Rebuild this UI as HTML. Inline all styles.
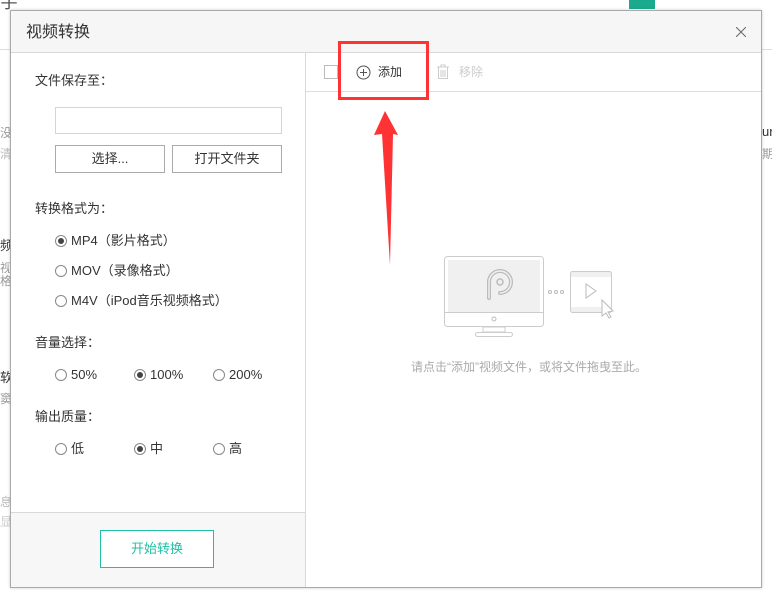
<!DOCTYPE html>
<html><head><meta charset="utf-8"><style>
*{margin:0;padding:0;box-sizing:border-box}
body{width:772px;height:596px;overflow:hidden;background:#fff;font-family:"Liberation Sans","Noto Sans CJK SC",sans-serif;position:relative;color:#333}
.a{position:absolute}
.t{font-size:13px;color:#333;white-space:nowrap;line-height:16px}
.r{position:absolute;width:12px;height:12px;border:1px solid #888;border-radius:50%;background:#fff}
.r.on::after{content:"";position:absolute;left:2px;top:2px;width:6px;height:6px;border-radius:50%;background:#444}
.btn{position:absolute;border:1px solid #aaa;background:#fff;font-size:13px;text-align:center;line-height:26px;color:#333}
.bg{color:#999;font-size:12px}
</style></head><body>
<div class="a" style="left:0;top:0;width:772px;height:50px;background:#fff;border-bottom:1px solid #ddd"></div>
<div class="a t" style="left:0;top:-6px;font-size:18px;color:#555">宇</div>
<div class="a" style="left:629px;top:0;width:26px;height:9px;background:#1aaa8e"></div>
<div class="a bg" style="left:0;top:124px">没</div><div class="a bg" style="left:0;top:145px;color:#bbb">清</div>
<div class="a t" style="left:0;top:238px">频</div><div class="a bg" style="left:0;top:259px">视</div><div class="a bg" style="left:0;top:272px">格</div>
<div class="a t" style="left:0;top:370px">软</div><div class="a bg" style="left:0;top:390px">窦</div>
<div class="a bg" style="left:0;top:493px;color:#bbb">息</div><div class="a bg" style="left:0;top:513px;color:#ccc">显</div>
<div class="a t" style="left:762px;top:124px">un</div><div class="a bg" style="left:762px;top:145px">期</div>

<div class="a" style="left:10px;top:10px;width:752px;height:578px;background:#fff;border:1px solid #aaa;box-shadow:0 0 3px rgba(0,0,0,.2)">
 <div class="a" style="left:0;top:0;width:750px;height:42px;background:#f6f6f6;border-bottom:1px solid #d8d8d8"></div>
 <div class="a t" style="left:15px;top:12px;font-size:16px;line-height:20px">视频转换</div>
 <svg class="a" style="left:725px;top:16px" width="10" height="10"><path d="M0 0L10 10M10 0L0 10" stroke="#666"/></svg>
 <div class="a" style="left:294px;top:42px;width:1px;height:534px;background:#d8d8d8"></div>
 <div class="a" style="left:0;top:501px;width:294px;height:75px;background:#f7f7f7;border-top:1px solid #d8d8d8"></div>
 <div class="a" style="left:295px;top:80px;width:455px;height:1px;background:#ddd"></div>
</div>
<!-- left panel -->
<div class="a t" style="left:35px;top:73px">文件保存至：</div>
<div class="a" style="left:55px;top:107px;width:227px;height:27px;border:1px solid #d5d5d5"></div>
<div class="btn" style="left:55px;top:145px;width:110px;height:28px">选择...</div>
<div class="btn" style="left:172px;top:145px;width:110px;height:28px">打开文件夹</div>
<div class="a t" style="left:35px;top:201px">转换格式为：</div>
<div class="r on" style="left:55px;top:235px"></div><div class="a t" style="left:71px;top:233px">MP4（影片格式）</div>
<div class="r" style="left:55px;top:265px"></div><div class="a t" style="left:71px;top:263px">MOV（录像格式）</div>
<div class="r" style="left:55px;top:295px"></div><div class="a t" style="left:71px;top:293px">M4V（iPod音乐视频格式）</div>
<div class="a t" style="left:35px;top:335px">音量选择：</div>
<div class="r" style="left:55px;top:369px"></div><div class="a t" style="left:71px;top:367px">50%</div>
<div class="r on" style="left:134px;top:369px"></div><div class="a t" style="left:150px;top:367px">100%</div>
<div class="r" style="left:213px;top:369px"></div><div class="a t" style="left:229px;top:367px">200%</div>
<div class="a t" style="left:35px;top:409px">输出质量：</div>
<div class="r" style="left:55px;top:443px"></div><div class="a t" style="left:71px;top:441px">低</div>
<div class="r on" style="left:134px;top:443px"></div><div class="a t" style="left:150px;top:441px">中</div>
<div class="r" style="left:213px;top:443px"></div><div class="a t" style="left:229px;top:441px">高</div>
<div class="a" style="left:100px;top:530px;width:114px;height:38px;border:1px solid #1fbfa5;background:#fff;color:#1fbfa5;font-size:13px;text-align:center;line-height:36px">开始转换</div>
<!-- toolbar -->
<div class="a" style="left:324px;top:65px;width:14px;height:14px;border:1px solid #bbb"></div>
<svg class="a" style="left:356px;top:65px" width="15" height="15"><circle cx="7.5" cy="7.5" r="6.5" fill="none" stroke="#555"/><path d="M7.5 4v7M4 7.5h7" stroke="#555"/></svg>
<div class="a t" style="left:378px;top:64px;font-size:12px">添加</div>
<svg class="a" style="left:436px;top:64px" width="14" height="16"><path d="M1 3h12M5 3V1h4v2M2.5 3.5v11h9v-11M5 6v7M7 6v7M9 6v7" fill="none" stroke="#ccc"/></svg>
<div class="a t" style="left:459px;top:64px;font-size:12px;color:#ccc">移除</div>
<div class="a" style="left:338px;top:41px;width:91px;height:59px;border:3px solid #f33"></div>
<svg class="a" style="left:360px;top:105px" width="50" height="170"><path d="M25 6L14 30L22 29L30 160L33 29L38 30Z" fill="#f33"/></svg>
<!-- illustration -->
<svg class="a" style="left:440px;top:252px" width="180" height="90">
<rect x="4.5" y="4.5" width="99" height="70" rx="3" fill="#fff" stroke="#ccc"/>
<rect x="8" y="8" width="92" height="52" fill="#f0f0f0"/>
<path d="M4.5 60.5h99" stroke="#ccc"/>
<circle cx="54" cy="67" r="2" fill="none" stroke="#bbb"/>
<rect x="43" y="75" width="22" height="5" fill="#fff" stroke="#ccc"/>
<rect x="35.5" y="80.5" width="37" height="4" rx="2" fill="#fff" stroke="#ccc"/>
<path d="M49 46V30a11 11 0 1 1 11 11" fill="none" stroke="#bbb" stroke-width="4" stroke-linecap="round"/>
<path d="M49 46V30a11 11 0 1 1 11 11" fill="none" stroke="#f0f0f0" stroke-width="1.5" stroke-linecap="round"/>
<circle cx="60" cy="30" r="3" fill="none" stroke="#bbb" stroke-width="1.5"/>
<circle cx="110" cy="40" r="1.5" fill="none" stroke="#bbb"/><circle cx="116" cy="40" r="1.5" fill="none" stroke="#bbb"/><circle cx="122" cy="40" r="1.5" fill="none" stroke="#bbb"/>
<rect x="130.5" y="19.5" width="41" height="41" rx="2" fill="#f0f0f0" stroke="#ccc"/>
<rect x="131" y="25" width="40" height="30" fill="#fff"/>
<path d="M146 32v14l10-7z" fill="none" stroke="#bbb"/>
<path d="M162 48v16l4-3 3 5 2-1-3-5 5-1z" fill="#fff" stroke="#bbb"/>
</svg>
<div class="a" style="left:411px;top:358px;font-size:12px;color:#aaa;white-space:nowrap">请点击“添加”视频文件，或将文件拖曳至此。</div>
</body></html>
